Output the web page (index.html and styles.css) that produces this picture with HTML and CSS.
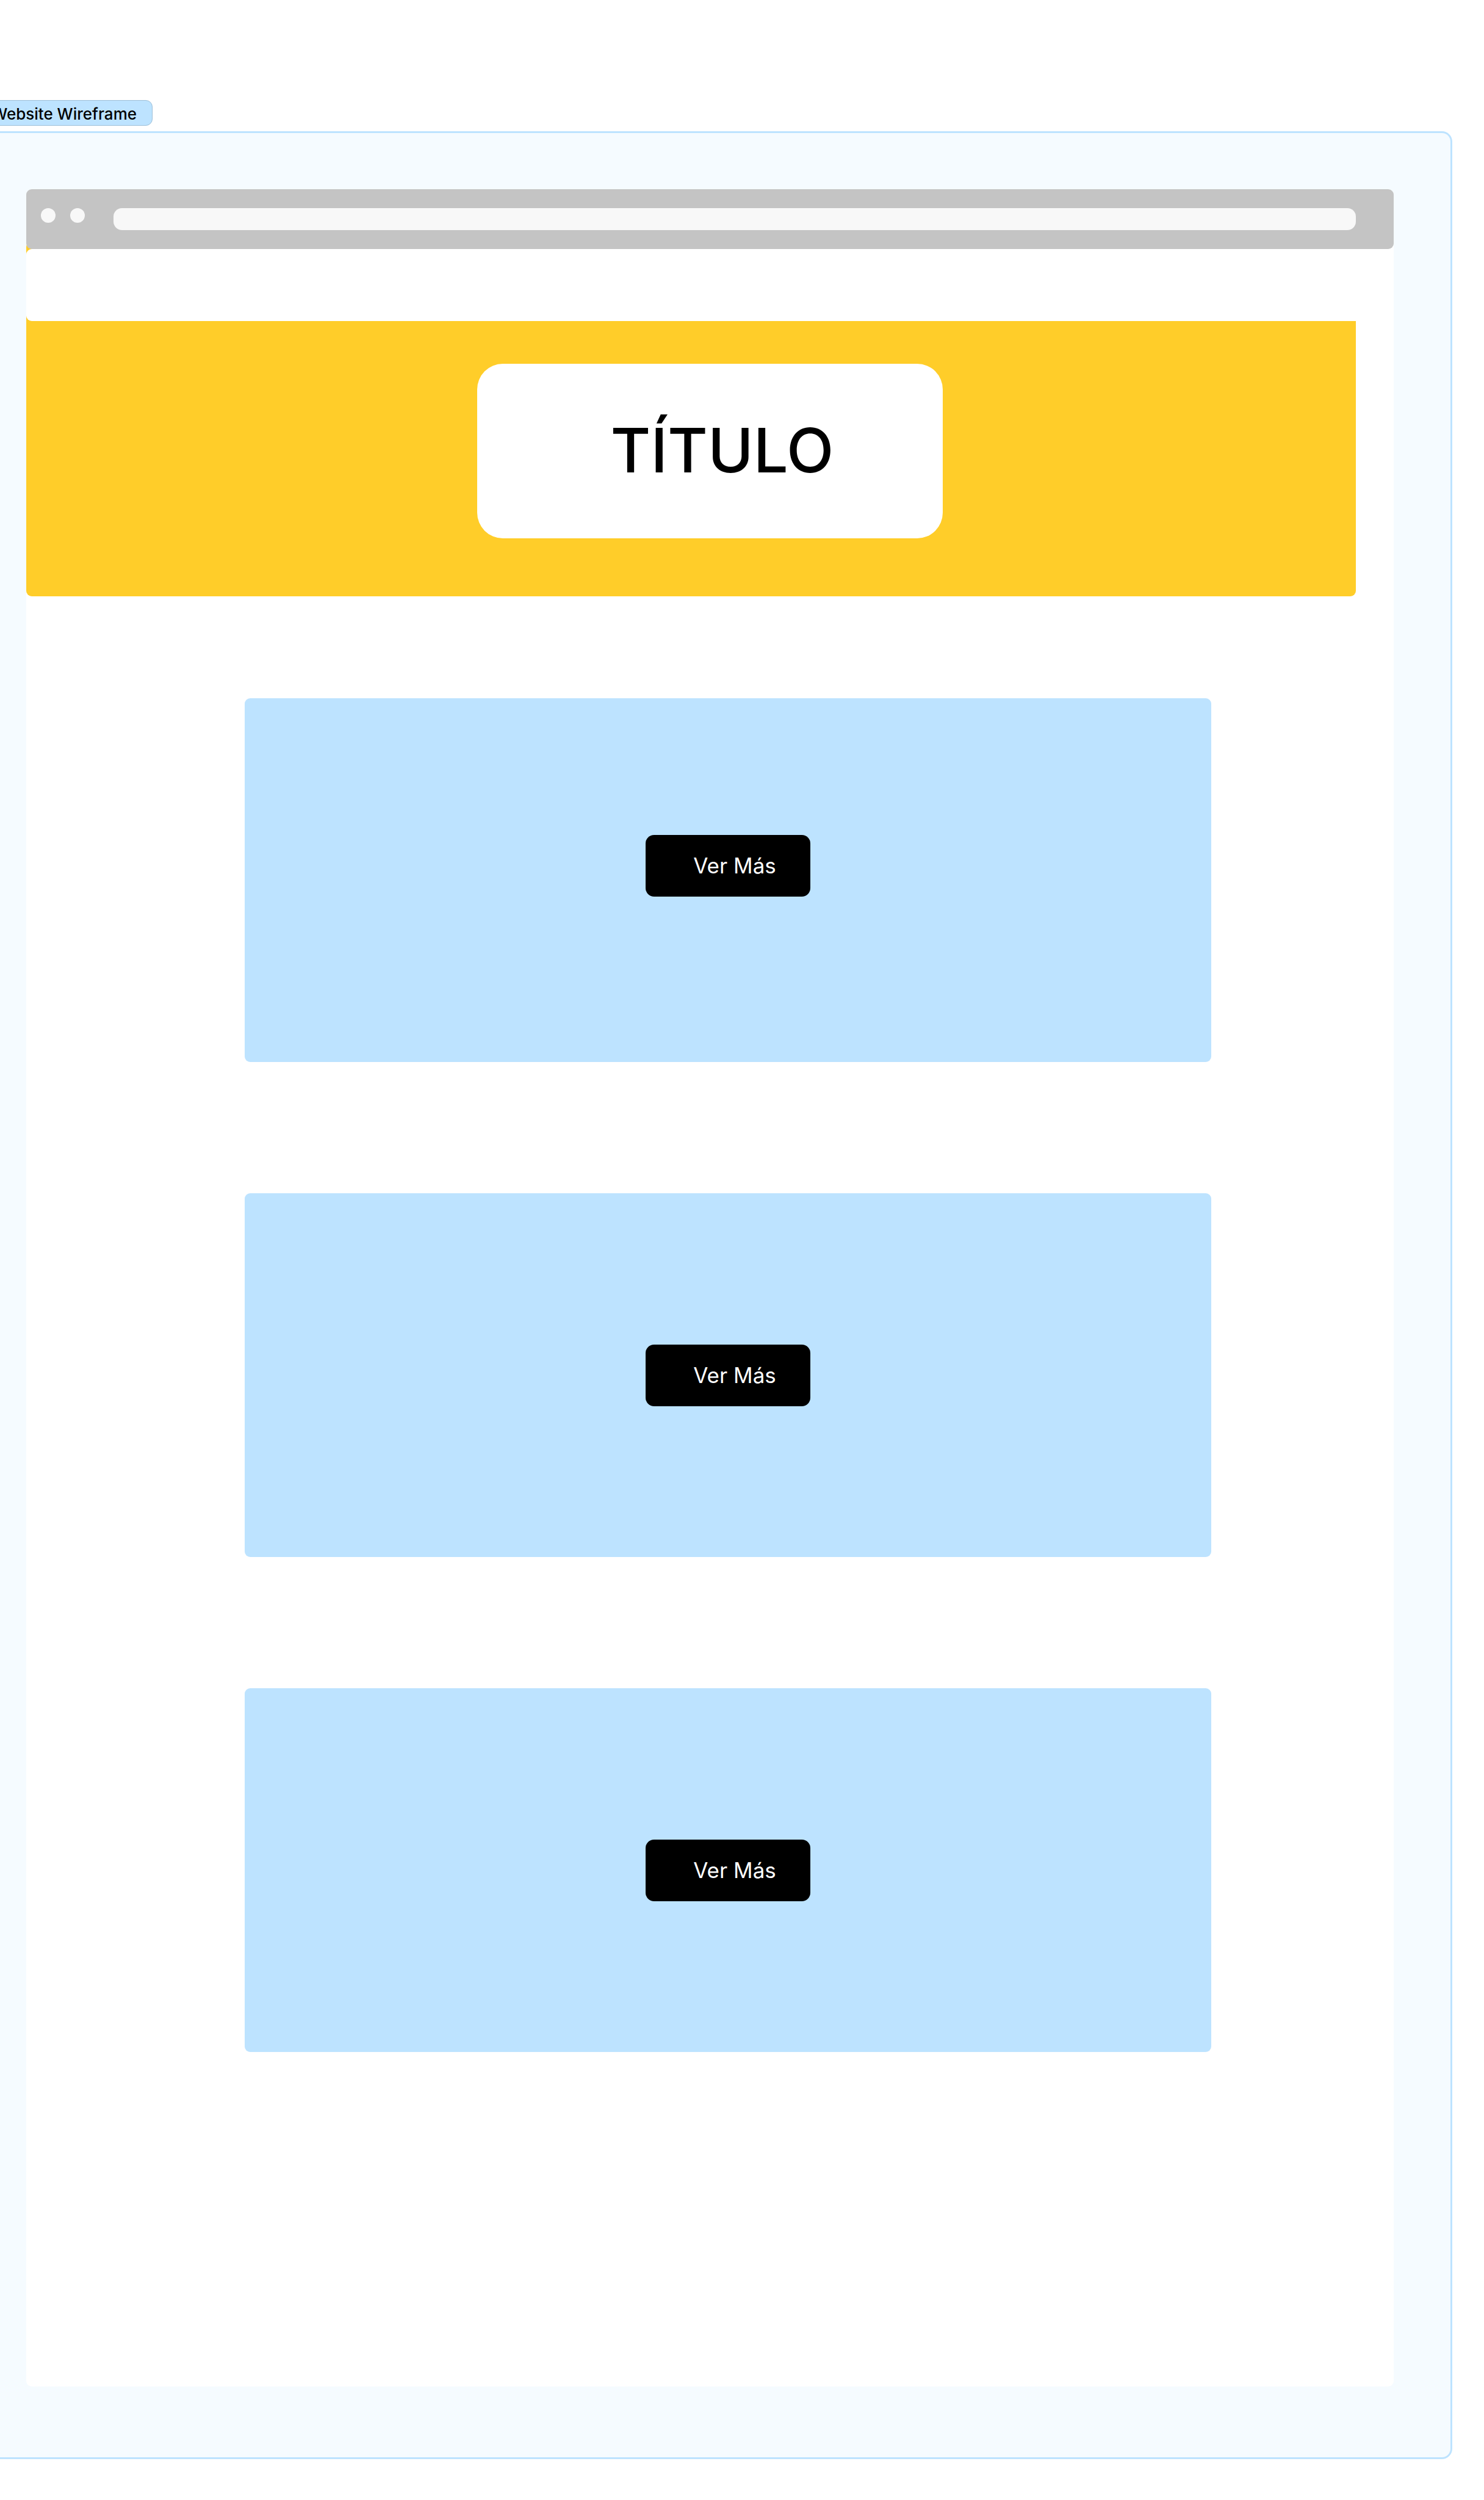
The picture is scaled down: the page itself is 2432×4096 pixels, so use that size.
FILE: index.html
```html
<!DOCTYPE html>
<html lang="es">
<head>
<meta charset="utf-8">
<title>Website Wireframe</title>
<link rel="stylesheet" href="styles.css">
</head>
<body>
<div class="tag">Website Wireframe</div>
<div class="frame">
  <div class="page">
    <div class="browser-bar">
      <span class="dot"></span>
      <span class="dot"></span>
      <input class="address" type="text" aria-label="URL">
    </div>
    <header class="hero">
      <nav class="menu"></nav>
      <div class="hero-body">
        <h1 class="title">TÍTULO</h1>
      </div>
    </header>
    <main class="cards">
      <section class="card card-first"><button class="more" type="button">Ver Más</button></section>
      <section class="card"><button class="more" type="button">Ver Más</button></section>
      <section class="card"><button class="more" type="button">Ver Más</button></section>
    </main>
  </div>
</div>
</body>
</html>
```

FILE: styles.css
```css
* {
  box-sizing: border-box;
}

body {
  margin: 0;
  padding: 164px 52px 67px 0;
  background: #fff;
  color: #000;
  font-family: Inter, "Liberation Sans", sans-serif;
}

/* Section label, running off the left edge of the canvas */
.tag {
  display: flex;
  align-items: center;
  justify-content: flex-end;
  width: 280px;
  height: 42px;
  margin-left: -30px;
  padding: 4px 25px 0 0;
  border: 1px solid #9dbfd8;
  border-radius: 11px;
  background: #bde3ff;
  font-size: 26px;
  font-weight: 500;
  line-height: 32px;
  white-space: nowrap;
}

.frame {
  margin-top: 9px;
  padding: 92px 93px 116px 43px;
  border: 3px solid #bde3ff;
  border-left: 0;
  border-radius: 0 17px 17px 0;
  background: #f5fbff;
}

.page {
  padding-bottom: 548px;
  border-radius: 9px;
  background: #fff;
}

.browser-bar {
  position: relative;
  z-index: 1;
  display: flex;
  align-items: flex-start;
  gap: 24px;
  height: 98px;
  padding: 31px 62px 0 24px;
  border-radius: 9px;
  background: #c4c4c4;
}

.dot {
  flex: none;
  width: 24px;
  height: 24px;
  border-radius: 50%;
  background: #f8f8f8;
}

.address {
  flex: 1;
  height: 36px;
  margin-left: 23px;
  padding: 0 16px;
  border: 0;
  border-radius: 14px;
  background: #f8f8f8;
  font: inherit;
}

/* The hero starts under the bar, so it shows in the rounded corners */
.hero {
  margin: -12px 62px 0 0;
  padding-top: 12px;
  border-radius: 9px;
  background: #ffcd29;
}

.menu {
  height: 118px;
  margin-right: -62px;
  border-radius: 9px;
  background: #fff;
}

.hero-body {
  padding: 70px 0 95px 62px;
}

.title {
  display: flex;
  align-items: center;
  justify-content: center;
  width: 36%;
  min-width: 480px;
  height: 286px;
  margin: 0 auto;
  padding: 0 0 4px 40px;
  border-radius: 42px;
  background: #fff;
  font-size: 101px;
  font-weight: 500;
  line-height: 120px;
}

.cards {
  display: flex;
  flex-direction: column;
  gap: 215px;
  padding: 167px 299px 0 358px;
}

.card {
  display: flex;
  align-items: center;
  justify-content: center;
  height: 596px;
  border-radius: 9px;
  background: #bde3ff;
}

.card-first {
  padding-bottom: 48px;
}

.more {
  width: 270px;
  height: 101px;
  padding: 0 0 0 22px;
  border: 0;
  border-radius: 14px;
  background: #000;
  color: #fff;
  font-family: inherit;
  font-size: 35px;
  font-weight: 400;
  line-height: 44px;
}
```
